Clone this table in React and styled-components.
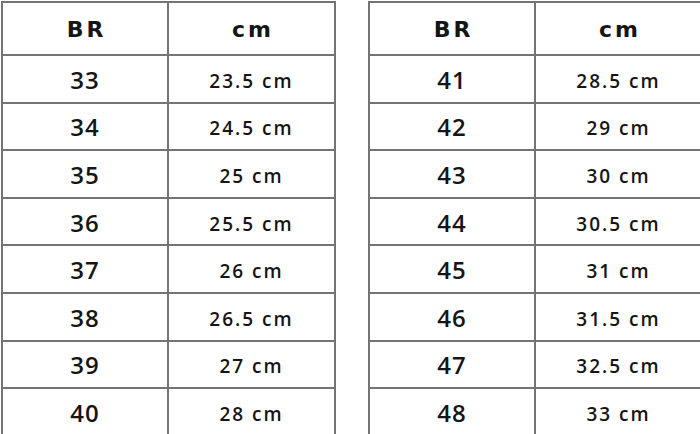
import { Fragment } from "react";
import styled, { createGlobalStyle } from "styled-components";

const GlobalStyle = createGlobalStyle`
  html, body {
    margin: 0;
    padding: 0;
    background: #ffffff;
    overflow: hidden;
  }
`;

const Page = styled.div`
  display: flex;
  gap: 32px;
  padding: 1px 0 0 1px;
  width: 720px;
  height: 434px;
  overflow: hidden;
  font-family: "Open Sans", "Liberation Sans", sans-serif;
  color: #151515;
`;

const Table = styled.div`
  display: grid;
  grid-template-columns: 166px 167px;
  grid-template-rows: 53px repeat(8, 47.6px);
  border-left: 2px solid #747474;
  border-top: 2px solid #747474;
  flex: none;
`;

const Cell = styled.div`
  display: flex;
  align-items: center;
  justify-content: center;
  border-right: 2px solid #747474;
  border-bottom: 2px solid #747474;
`;

const Head = styled(Cell)`
  font-family: "DejaVu Sans", "Liberation Sans", sans-serif;
  font-weight: 700;
  font-size: 22px;
  letter-spacing: 3px;
  padding-left: 3px;
  padding-top: 2px;
`;

const Size = styled(Cell)`
  font-size: 24px;
  font-weight: 600;
  letter-spacing: 1px;
  padding-top: 1px;
`;

const Length = styled(Cell)`
  font-size: 19px;
  font-weight: 600;
  letter-spacing: 2px;
  padding-top: 4px;
`;

const left = [
  ["33", "23.5 cm"],
  ["34", "24.5 cm"],
  ["35", "25 cm"],
  ["36", "25.5 cm"],
  ["37", "26 cm"],
  ["38", "26.5 cm"],
  ["39", "27 cm"],
  ["40", "28 cm"],
];

const right = [
  ["41", "28.5 cm"],
  ["42", "29 cm"],
  ["43", "30 cm"],
  ["44", "30.5 cm"],
  ["45", "31 cm"],
  ["46", "31.5 cm"],
  ["47", "32.5 cm"],
  ["48", "33 cm"],
];

function SizeTable({ rows }) {
  return (
    <Table>
      <Head>BR</Head>
      <Head>cm</Head>
      {rows.map(([br, cm]) => (
        <Fragment key={br}>
          <Size>{br}</Size>
          <Length>{cm}</Length>
        </Fragment>
      ))}
    </Table>
  );
}

export default function App() {
  return (
    <>
      <GlobalStyle />
      <Page>
        <SizeTable rows={left} />
        <SizeTable rows={right} />
      </Page>
    </>
  );
}
